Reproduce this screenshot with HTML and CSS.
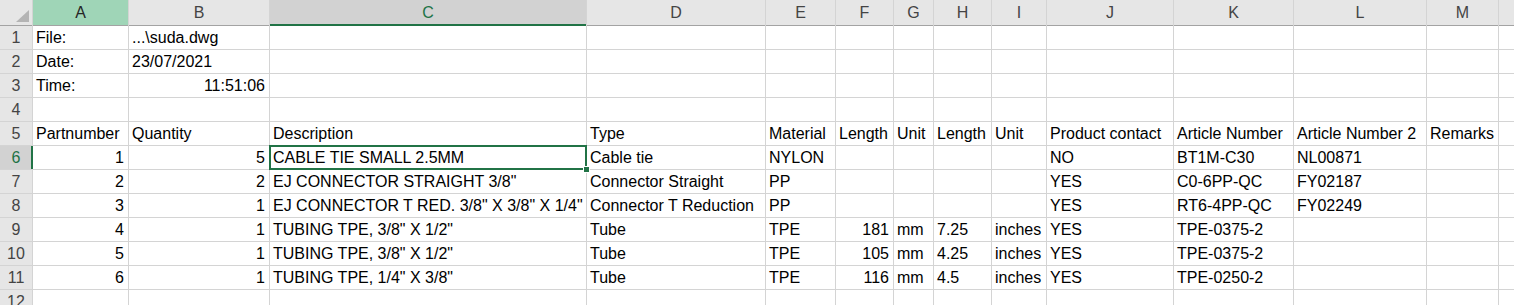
FILE: index.html
```html
<!DOCTYPE html>
<html>
<head>
<meta charset="utf-8">
<link rel="stylesheet" href="styles.css">
</head>
<body>
<div class="sheet">
  <div class="hdr corner"><svg width="13" height="12" viewBox="0 0 13 12"><polygon points="13,0 13,12 0,12" fill="#b4b4b4"/></svg></div>
  <div class="hdr hov">A</div><div class="hdr">B</div><div class="hdr act">C</div><div class="hdr">D</div><div class="hdr">E</div><div class="hdr">F</div><div class="hdr">G</div><div class="hdr">H</div><div class="hdr">I</div><div class="hdr">J</div><div class="hdr">K</div><div class="hdr">L</div><div class="hdr">M</div><div class="hdr"></div>

  <div class="rh">1</div><div class="c">File:</div><div class="c">...\suda.dwg</div><div class="c"></div><div class="c"></div><div class="c"></div><div class="c"></div><div class="c"></div><div class="c"></div><div class="c"></div><div class="c"></div><div class="c"></div><div class="c"></div><div class="c"></div><div class="c"></div>

  <div class="rh">2</div><div class="c">Date:</div><div class="c">23/07/2021</div><div class="c"></div><div class="c"></div><div class="c"></div><div class="c"></div><div class="c"></div><div class="c"></div><div class="c"></div><div class="c"></div><div class="c"></div><div class="c"></div><div class="c"></div><div class="c"></div>

  <div class="rh">3</div><div class="c">Time:</div><div class="c r">11:51:06</div><div class="c"></div><div class="c"></div><div class="c"></div><div class="c"></div><div class="c"></div><div class="c"></div><div class="c"></div><div class="c"></div><div class="c"></div><div class="c"></div><div class="c"></div><div class="c"></div>

  <div class="rh">4</div><div class="c"></div><div class="c"></div><div class="c"></div><div class="c"></div><div class="c"></div><div class="c"></div><div class="c"></div><div class="c"></div><div class="c"></div><div class="c"></div><div class="c"></div><div class="c"></div><div class="c"></div><div class="c"></div>

  <div class="rh">5</div><div class="c">Partnumber</div><div class="c">Quantity</div><div class="c">Description</div><div class="c">Type</div><div class="c">Material</div><div class="c">Length</div><div class="c">Unit</div><div class="c">Length</div><div class="c">Unit</div><div class="c">Product contact</div><div class="c">Article Number</div><div class="c">Article Number 2</div><div class="c">Remarks</div><div class="c"></div>

  <div class="rh act">6</div><div class="c r">1</div><div class="c r">5</div><div class="c sel">CABLE TIE SMALL 2.5MM</div><div class="c">Cable tie</div><div class="c">NYLON</div><div class="c"></div><div class="c"></div><div class="c"></div><div class="c"></div><div class="c">NO</div><div class="c">BT1M-C30</div><div class="c">NL00871</div><div class="c"></div><div class="c"></div>

  <div class="rh">7</div><div class="c r">2</div><div class="c r">2</div><div class="c">EJ CONNECTOR STRAIGHT 3/8"</div><div class="c">Connector Straight</div><div class="c">PP</div><div class="c"></div><div class="c"></div><div class="c"></div><div class="c"></div><div class="c">YES</div><div class="c">C0-6PP-QC</div><div class="c">FY02187</div><div class="c"></div><div class="c"></div>

  <div class="rh">8</div><div class="c r">3</div><div class="c r">1</div><div class="c">EJ CONNECTOR T RED. 3/8" X 3/8" X 1/4"</div><div class="c">Connector T Reduction</div><div class="c">PP</div><div class="c"></div><div class="c"></div><div class="c"></div><div class="c"></div><div class="c">YES</div><div class="c">RT6-4PP-QC</div><div class="c">FY02249</div><div class="c"></div><div class="c"></div>

  <div class="rh">9</div><div class="c r">4</div><div class="c r">1</div><div class="c">TUBING TPE, 3/8" X 1/2"</div><div class="c">Tube</div><div class="c">TPE</div><div class="c r">181</div><div class="c">mm</div><div class="c">7.25</div><div class="c">inches</div><div class="c">YES</div><div class="c">TPE-0375-2</div><div class="c"></div><div class="c"></div><div class="c"></div>

  <div class="rh">10</div><div class="c r">5</div><div class="c r">1</div><div class="c">TUBING TPE, 3/8" X 1/2"</div><div class="c">Tube</div><div class="c">TPE</div><div class="c r">105</div><div class="c">mm</div><div class="c">4.25</div><div class="c">inches</div><div class="c">YES</div><div class="c">TPE-0375-2</div><div class="c"></div><div class="c"></div><div class="c"></div>

  <div class="rh">11</div><div class="c r">6</div><div class="c r">1</div><div class="c">TUBING TPE, 1/4" X 3/8"</div><div class="c">Tube</div><div class="c">TPE</div><div class="c r">116</div><div class="c">mm</div><div class="c">4.5</div><div class="c">inches</div><div class="c">YES</div><div class="c">TPE-0250-2</div><div class="c"></div><div class="c"></div><div class="c"></div>

  <div class="rh">12</div><div class="c"></div><div class="c"></div><div class="c"></div><div class="c"></div><div class="c"></div><div class="c"></div><div class="c"></div><div class="c"></div><div class="c"></div><div class="c"></div><div class="c"></div><div class="c"></div><div class="c"></div><div class="c"></div>
</div>
</body>
</html>
```
FILE: styles.css
```css
html, body {
  margin: 0;
  padding: 0;
  background: #ffffff;
  overflow: hidden;
}
body {
  font-family: "Liberation Sans", Arial, sans-serif;
  font-size: 16px;
  color: #000;
}
.sheet {
  display: grid;
  grid-template-columns: 32px 95px 140px 316px 178px 69px 57px 39px 57px 54px 126px 119px 132px 71px 1fr;
  grid-template-rows: 25px;
  grid-auto-rows: 23px;
  gap: 1px;
  background: #d4d4d4;
  height: 305px;
  overflow: hidden;
}
.c {
  background: #fff;
  padding: 0 3px;
  line-height: 23px;
  white-space: nowrap;
}
.r {
  text-align: right;
  padding-right: 4px;
}
.hdr {
  background: #e6e6e6;
  color: #444;
  text-align: center;
  line-height: 25px;
  box-shadow: 0 1px 0 #a3a3a3;
}
.corner {
  display: flex;
  align-items: flex-end;
  justify-content: flex-end;
  padding: 0 3px 3px 0;
}
.corner svg {
  display: block;
}
.hdr.hov {
  background: #9fd5b7;
  color: #262626;
}
.hdr.act {
  background: #d2d2d2;
  color: #217346;
  box-shadow: inset 0 -1px 0 #217346, 0 1px 0 #217346;
}
.rh {
  background: #e6e6e6;
  color: #444;
  text-align: center;
  line-height: 23px;
}
.rh.act {
  background: #d2d2d2;
  color: #217346;
  box-shadow: inset -1px 0 0 #217346, 1px 0 0 #217346;
}
.sel {
  position: relative;
  z-index: 2;
}
.sel::after {
  content: "";
  position: absolute;
  left: -1px;
  top: -1px;
  right: -1px;
  bottom: -1px;
  border: 2px solid #217346;
}
.sel::before {
  content: "";
  position: absolute;
  right: -4px;
  bottom: -4px;
  width: 5px;
  height: 5px;
  background: #217346;
  border: 1px solid #fff;
  z-index: 3;
}
```
